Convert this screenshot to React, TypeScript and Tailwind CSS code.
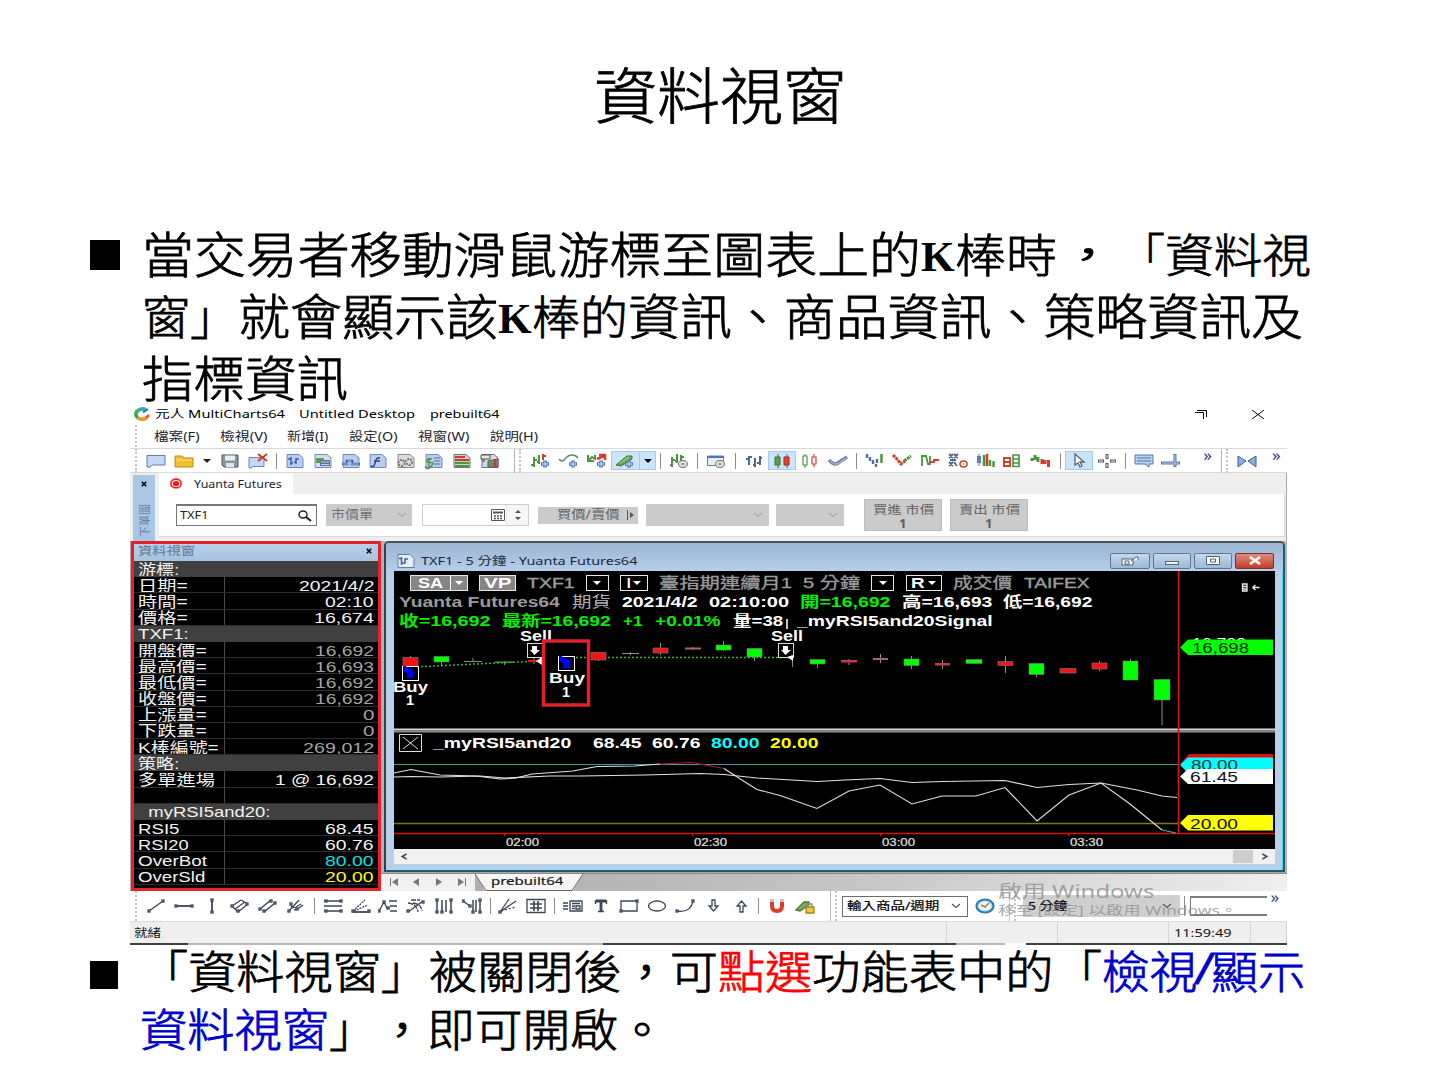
import React, { useLayoutEffect, useRef } from "react";

const UI = "font-['Noto_Sans','Noto_Sans_CJK_TC',sans-serif]";
const ARIAL = "font-['Liberation_Sans','Noto_Sans_CJK_TC',sans-serif]";
const HEI = "font-['Noto_Sans_CJK_TC',sans-serif]";

/** One line of text, stretched horizontally to fill exactly `w` pixels. */
function Fit({ w, className = "", children }: { w: number; className?: string; children: React.ReactNode }) {
  const ref = useRef<HTMLSpanElement>(null);
  useLayoutEffect(() => {
    const el = ref.current;
    if (el) el.style.transform = `scaleX(${w / el.offsetWidth})`;
  }, [w]);
  return (
    <span className={`block shrink-0 ${className}`} style={{ width: w }}>
      <span ref={ref} className="inline-block origin-left whitespace-pre">
        {children}
      </span>
    </span>
  );
}

/* ---------- icons ---------- */

function Cell({ children, on = false }: { children: React.ReactNode; on?: boolean }) {
  return (
    <span className={`flex h-[19px] w-[27.8px] shrink-0 items-center justify-center ${on ? "bg-[#cce4f7] outline outline-1 -outline-offset-1 outline-[#99cdf5]" : ""}`}>
      <svg viewBox="0 0 20 14" className="h-[14px] w-5 overflow-visible" fill="none">
        {children}
      </svg>
    </span>
  );
}
function Sep({ cls = "w-[9px]" }: { cls?: string }) {
  return (
    <span className={`flex h-4 shrink-0 justify-center ${cls}`}>
      <span className="w-px bg-[#8c8c8c]" />
    </span>
  );
}
function Grip({ cls = "h-6" }: { cls?: string }) {
  return <span className={`w-0 shrink-0 border-l-2 border-dotted border-[#c4c4c4] ${cls}`} />;
}
const Plus = () => <path d="M14 6.500v7M10 10h8" stroke="#4f76b8" strokeWidth="3.600" />;
const PlusLight = () => (
  <>
    <Plus />
    <path d="M14 7.500v5M11 10h6" stroke="#b4caee" strokeWidth="1.400" />
  </>
);
const Doc = ({ fill = "#b9cdf0", stroke = "#6f8cc0" }: { fill?: string; stroke?: string }) => (
  <path d="M2 .5h12l4 3.500v9.500H2z" fill={fill} stroke={stroke} />
);

function FileIcons() {
  return (
    <>
      <Cell>
        <path d="M1 1.500h18v9.500H6l-2 2H1z" fill="#c3d8f5" stroke="#5f7ea8" />
      </Cell>
      <Cell>
        <path d="M1 2h7l2 2h9v9H1z" fill="#f2be2c" stroke="#b98a17" />
        <path d="M2 6h16" stroke="#ffe28a" />
      </Cell>
      <span className="flex w-[19px] shrink-0 justify-center">
        <span className="border-x-4 border-t-4 border-x-transparent border-t-[#222]" />
      </span>
      <Cell>
        <path d="M2 1h16v12H4l-2-2z" fill="#8b97a3" stroke="#4c5661" />
        <path d="M5 1.500h10v5H5z" fill="#e9eef3" />
        <path d="M6 9h8v4H6z" fill="#dfe5ea" />
      </Cell>
      <Cell>
        <path d="M1 3.500h15v9H5l-2 1.500H1z" fill="#c3d8f5" stroke="#6d87ad" />
        <path d="M10 0l9 7M19 0l-9 7" stroke="#cc3b2b" strokeWidth="2" />
      </Cell>
    </>
  );
}

function DocIcons() {
  return (
    <>
      <Cell><Doc /><path d="M6 3v8M3 5h3M6 9h2M11 4v6M9 8h2M11 5h3" stroke="#3c5ea8" strokeWidth="1.500" /></Cell>
      <Cell><Doc fill="#d7dee8" /><path d="M3 4h8v5H3z" fill="#5aa04a" /><path d="M7 6h10v6H7z" fill="#56749c" /><path d="M8 8h8M8 10.500h8" stroke="#e8eef5" strokeWidth=".8" /></Cell>
      <Cell><Doc /><path d="M1 10h5V7h5v3h8" stroke="#3c5ea8" strokeWidth="2.600" /><path d="M2 10h5V7h3v3h8" stroke="#dbe6f8" strokeWidth=".7" /></Cell>
      <Cell><Doc /><path d="M12 4q-3-1-4 2L6 12q-1 1-3 0M6 7h6" stroke="#2c4580" strokeWidth="1.400" /></Cell>
      <Cell><Doc fill="#dcdcdc" stroke="#8a8a8a" /><circle cx="5.500" cy="9" r="3" stroke="#777" strokeWidth="2" strokeDasharray="2 1" /><circle cx="13" cy="8" r="3" stroke="#777" strokeWidth="2" strokeDasharray="2 1" /></Cell>
      <Cell><Doc /><path d="M8 5q-5-1-5 1.500t4 2 0 4-6 0M5 3.500v10" stroke="#4f9440" strokeWidth="1.400" /><path d="M10 4h6M10 7h6M10 10h6" stroke="#5b7394" strokeWidth="1.200" /></Cell>
      <Cell><Doc fill="#c9cdd4" stroke="#777" /><path d="M3 3h10M3 6h14" stroke="#cc3a2c" strokeWidth="2" /><path d="M3 9h14M3 12h14" stroke="#4a9a3c" strokeWidth="2" /></Cell>
      <Cell><Doc fill="#d4d8de" stroke="#777" /><path d="M1 1h9v4H1zM4 5v3M1 5l3 3" fill="#e8e8e8" stroke="#555" /><path d="M8 7v6h10V5z" fill="#8593a6" stroke="#555" /><path d="M9 9h4M9 11h4" stroke="#4a9a3c" strokeWidth="1.500" /><path d="M15 6v7" stroke="#cc3a2c" strokeWidth="3" /></Cell>
    </>
  );
}

function MainToolbar() {
  return (
    <div className="flex h-[25px] items-center border-y border-[#d9d9d9] bg-white pl-[5px]">
      <Grip />
      <span className="w-[5px] shrink-0" />
      <FileIcons />
      <Sep />
      <DocIcons />
      <span className="ml-2.5 h-6 w-px shrink-0 bg-[#b5b5b5]" />
      <span className="w-1 shrink-0" />
      <Grip />
      <span className="w-[7px] shrink-0" />
      <Cell><path d="M3 3v10M0 11h3M3 6h3M8 1v9M6 8h2" stroke="#4b9440" strokeWidth="2" /><path d="M12 0v6M12 2h3" stroke="#d0402c" strokeWidth="2" /><PlusLight /></Cell>
      <Cell><path d="M0 5q3 4 6 0t7-4 6 3" stroke="#5f8a6d" strokeWidth="1.400" /><PlusLight /></Cell>
      <Cell><path d="M1 1v6h6M2 6l3-3 3 2V1" stroke="#4b9440" strokeWidth="2" /><path d="M10 5l7-3M12 1h6v5" stroke="#d0402c" strokeWidth="2.600" /><PlusLight /></Cell>
      <span className="flex shrink-0 bg-[#cce4f7] outline outline-1 -outline-offset-1 outline-[#99cdf5]">
        <Cell><path d="M1 11L12 2h5v3L6 12z" fill="#6aa84f" stroke="#47762f" /><path d="M5 9l9-6" stroke="#b6dc9f" /><PlusLight /></Cell>
        <span className="flex w-[17px] items-center justify-center border-l border-[#99cdf5]">
          <span className="border-x-4 border-t-4 border-x-transparent border-t-black" />
        </span>
      </span>
      <Sep />
      <Cell><path d="M3 3v10M1 11h2M3 6h3M8 0v9M6 7h2M12 1v6M12 3h3" stroke="#4b9440" strokeWidth="2" /><ellipse cx="14" cy="10" rx="4.500" ry="3.500" fill="#ddd" stroke="#777" /><ellipse cx="14" cy="10" rx="1.500" ry="1" fill="#888" /></Cell>
      <Sep cls="w-[10px]" />
      <Cell><path d="M1.500 2h16v9.500h-16z" fill="#e4edf8" stroke="#5f7ea8" /><path d="M1 3h17" stroke="#4f76b8" strokeWidth="2" /><ellipse cx="14" cy="10" rx="4.500" ry="3.500" fill="#ddd" stroke="#777" /><ellipse cx="14" cy="10" rx="1.500" ry="1" fill="#888" /></Cell>
      <Sep cls="w-[10px]" />
      <Cell><path d="M5 2v9M2 5h3M5 3h3M11 4v9M9 11h2M16 2v9M13 9h3M16 4h2" stroke="#4a6a94" strokeWidth="2" /></Cell>
      <Cell on><path d="M6 0v14M15 0v14" stroke="#555" /><path d="M3 3h5v8H3z" fill="#58a04c" stroke="#38752e" /><path d="M12 3h5v8h-5z" fill="#de4532" stroke="#a32a1c" /></Cell>
      <Cell><path d="M5 0v2M5 11v3M3 2h4v9H3z" stroke="#4b9440" strokeWidth="1.200" /><path d="M14 0v3M14 10v3M12 3h4v7h-4z" stroke="#d0402c" strokeWidth="1.200" /></Cell>
      <Cell><path d="M1 6q5 6 9 3t9-6" stroke="#7186a3" strokeWidth="3.500" /><path d="M2 7q5 5 9 2t7-5" stroke="#b9c7d8" /></Cell>
      <Sep />
      <Cell><path d="M3 0v4M6 3v4M9 6v4M12 10v3M13 5v4" stroke="#4f6f9c" strokeWidth="2.400" /><path d="M17.500 0v9" stroke="#4b9440" strokeWidth="2.500" /></Cell>
      <Cell><path d="M1 1l4 4 4 5 4-3" stroke="#d0402c" strokeWidth="3" strokeDasharray="3 .7" /><path d="M12 7l7-5" stroke="#4b9440" strokeWidth="3" strokeDasharray="3 .7" /></Cell>
      <Cell><path d="M2 12V2h4l2 8h2V2" stroke="#4b9440" strokeWidth="1.800" /><path d="M10 8h4V6h5" stroke="#d0402c" strokeWidth="1.800" /></Cell>
      <Cell><path d="M1 0l4 4M5 0L1 4M6 0l4 4M10 0L6 4M1 8l4 4M5 8l-4 4M6 8l3 4M2 6h6" stroke="#4f6680" strokeWidth="1.800" /><ellipse cx="15.500" cy="10" rx="3.500" ry="3" stroke="#d0402c" strokeWidth="1.500" /><circle cx="15.500" cy="10" r=".8" fill="#d0402c" /></Cell>
      <Cell><path d="M3 0v12" stroke="#4f6f9c" /><path d="M1 2h4v7H1z" fill="#5f80b0" /><path d="M8 1v11" stroke="#4b9440" strokeWidth="2.500" /><path d="M11 0v12" stroke="#d0402c" strokeWidth="2.600" /><path d="M14 6v6M17.500 7v6" stroke="#4b9440" strokeWidth="2.400" /></Cell>
      <Cell><path d="M1 4h6v4H1zM1 8h6v4H1z" stroke="#d0402c" strokeWidth="1.900" /><path d="M10 1h6v4h-6zM10 5h6v4h-6zM10 9h6v3.500h-6z" stroke="#4b9440" strokeWidth="1.700" /></Cell>
      <Cell><path d="M1 4v3M4 1v5M7 3v5" stroke="#4b9440" strokeWidth="3" /><path d="M11 5v5M14 6v4M17.500 6v7" stroke="#d0402c" strokeWidth="3" /></Cell>
      <Sep cls="w-[10px]" />
      <Cell on><path d="M6 0v11l3-2 2 4 2-1-2-4h4z" fill="#fff" stroke="#5a6470" strokeWidth="1.300" /></Cell>
      <Cell><path d="M10 0v5M10 9v5M1 7h6M13 7h6" stroke="#555" strokeWidth="3" /><path d="M10 1v3M10 10v3M2 7h4M14 7h4" stroke="#fff" /></Cell>
      <Sep />
      <Cell><path d="M1 1h18v9h-4v3l-4-3H1z" fill="#bcd2ef" stroke="#5474a6" /><path d="M3 4h14M3 7h14" stroke="#5474a6" /></Cell>
      <Cell><path d="M0 9h19M14 0v13" stroke="#5474a6" strokeWidth="3" /><path d="M1 9h17M14 1v11" stroke="#b9cfec" /></Cell>
      <span className="ml-[18px] mb-3 w-3 shrink-0 text-[17px] leading-none text-[#2b3a8a]">»</span>
      <span className="ml-1.5 h-6 w-px shrink-0 bg-[#b5b5b5]" />
      <span className="w-1 shrink-0" />
      <Grip />
      <span className="w-[5px] shrink-0" />
      <Cell><path d="M1 2l8 5-8 6z" fill="#86b0e0" stroke="#41618f" /><path d="M19 2l-8 5 8 6z" fill="#86b0e0" stroke="#41618f" /></Cell>
      <span className="ml-[11px] mb-3 w-3 shrink-0 text-[17px] leading-none text-[#2b3a8a]">»</span>
    </div>
  );
}

/* ---------- drawing toolbar ---------- */

const INK = "#3c4656";
function Tool({ children }: { children: React.ReactNode }) {
  return (
    <span className="flex w-[27.95px] shrink-0 items-center justify-center">
      <svg viewBox="0 0 20 16" className="h-4 w-5" fill="none" stroke={INK} strokeWidth="1.300">
        {children}
      </svg>
    </span>
  );
}
const Dots = ({ p }: { p: [number, number][] }) => (
  <>
    {p.map(([x, y], i) => (
      <rect key={i} x={x - 1} y={y - 1} width="2" height="2" fill="#fff" />
    ))}
  </>
);

function DrawToolbar() {
  return (
    <div className="relative flex h-[31px] items-center border-b border-[#dcdcdc] bg-white pl-[5px]">
      <Grip cls="h-[30px]" />
      <span className="w-[5px] shrink-0" />
      <Tool><path d="M3 13L17 3" /><Dots p={[[3, 13], [17, 3]]} /></Tool>
      <Tool><path d="M2 8h17" strokeWidth="1.800" /><Dots p={[[2, 8], [18, 8]]} /></Tool>
      <Tool><path d="M10 2v13" strokeWidth="1.800" /><Dots p={[[10, 2], [10, 14]]} /></Tool>
      <Tool><path d="M2 8l9-6M5 11l10-7M8 14l10-8M2 8l6 6M11 2l7 4" /><Dots p={[[2, 8], [8, 13], [17, 6]]} /></Tool>
      <Tool><path d="M2 11L13 2M6 14L17 5" strokeWidth="1.500" /><Dots p={[[2, 11], [6, 13], [13, 3], [17, 5]]} /></Tool>
      <Tool><path d="M2 14L13 2M5 7q1 4 5 2l5-3M8 12q3 0 9-5" /><Dots p={[[3, 13], [5, 6], [11, 11]]} /></Tool>
      <Sep />
      <Tool><path d="M1 3h18M1 8h18M1 13h18" strokeWidth="1.600" /><Dots p={[[3, 3], [3, 13], [18, 3], [18, 13]]} /></Tool>
      <Tool><path d="M2 14h17" strokeWidth="1.800" /><path d="M2 13L14 2M3 13l14-6" strokeDasharray="2 1" /><Dots p={[[2, 13], [18, 13]]} /></Tool>
      <Tool><path d="M1 13l5-9 3 6 3-1M11 3h8M12 8h7M12 13h7" /><Dots p={[[1, 13], [6, 4], [10, 10]]} /></Tool>
      <Tool><path d="M2 14L17 3" /><path d="M2 5q9 1 10 9M5 2h9M7 5q8 1 9 8" strokeDasharray="5 1" /><Dots p={[[2, 13], [17, 4]]} /></Tool>
      <Tool><path d="M3 2v12M8 2v12M12 2v12M17 2v12" strokeWidth="1.500" /><Dots p={[[3, 2], [3, 14], [8, 14], [17, 2], [17, 14]]} /></Tool>
      <Tool><path d="M1 3l7 5M11 2v12M14 2v12M18 2v12" strokeWidth="1.500" /><Dots p={[[1, 3], [8, 8], [11, 14], [18, 2], [18, 14]]} /></Tool>
      <Sep cls="w-2" />
      <Tool><path d="M2 14L11 1M2 14L18 3" /><path d="M3 13l15-4" strokeDasharray="2 2" /><Dots p={[[2, 14]]} /></Tool>
      <Tool><path d="M1 1.500h18v13H1z" /><path d="M4 6h12M4 10h12M8 3v10M12 3v10" strokeWidth="1.600" /></Tool>
      <Sep />
      <Tool><path d="M0 5h5M0 8h5M0 11h5M7 3h12v10H7zM9 5.500h8M9 8h3M9 10.500h3M13 8h4v3h-4z" /></Tool>
      <Tool><path d="M5 3h10M10 3v10" strokeWidth="2.800" /><path d="M7 13.500h6M4.500 2v4M15.500 2v4" strokeWidth="1.400" /></Tool>
      <Tool><path d="M2 3h16v10H2z" /><Dots p={[[2, 13], [18, 3]]} /></Tool>
      <Tool><ellipse cx="10" cy="8" rx="8.500" ry="5" /></Tool>
      <Tool><path d="M2 13q14 2 16-10" /><Dots p={[[2, 13], [18, 3]]} /></Tool>
      <Tool><path d="M9 2h3v6h3l-4.500 5L6 8h3z" /></Tool>
      <Tool><path d="M9 14h3V8h3l-4.500-5L6 8h3z" /></Tool>
      <Sep cls="w-2" />
      <Tool><path d="M5 2v6q0 5 5 5t5-5V2" stroke="#d9402c" strokeWidth="4" /><path d="M3 2.500h4M13 2.500h4" stroke="#c4c4c4" strokeWidth="3" /></Tool>
      <Tool><path d="M1 12L9 4h5v3L5 13z" fill="#76ad5c" stroke="#4c7a37" /><path d="M11 9h8v6h-8z" fill="#f3c433" stroke="#a8841b" /><path d="M13 9V6h4v3" stroke="#888" /></Tool>
      <span className="ml-[11px] h-[30px] w-px shrink-0 bg-[#b5b5b5]" />
      <span className="w-1 shrink-0" />
      <Grip cls="h-[30px]" />
      <div className="ml-[5px] flex h-[21px] w-[126px] shrink-0 items-center border border-[#6e6e6e] bg-white pl-1 text-[11.5px] text-black">
        <Fit w={92} className="[-webkit-text-stroke:0.2px_#000]">輸入商品/週期</Fit>
        <Chevron cls="ml-3" color="#555" />
      </div>
      <svg viewBox="0 0 20 16" className="ml-[7px] h-4 w-5 shrink-0">
        <ellipse cx="10" cy="8" rx="8.500" ry="6.500" fill="#b9dcf0" stroke="#2d7fb0" strokeWidth="2.200" />
        <ellipse cx="10" cy="8" rx="6" ry="4.300" fill="#edf6fb" />
        <path d="M6 7l4 2 4-4" stroke="#b77d35" strokeWidth="1.600" fill="none" />
      </svg>
      <span className="ml-3.5 h-[30px] w-px shrink-0 bg-[#c9c9c9]" />
      <span className="w-1 shrink-0" />
      <Grip cls="h-[30px]" />
      <div className="ml-[7px] flex h-[22px] w-[157px] shrink-0 items-center border border-[#d0d0d0] bg-[#cfcfcf] pl-1 text-[11.5px] text-black">
        <Fit w={40} className="[-webkit-text-stroke:0.2px_#000]">5 分鐘</Fit>
        <Chevron cls="ml-[94px]" color="#555" />
      </div>
      <span className="ml-1 h-5 w-px shrink-0 bg-[#8c8c8c]" />
      <span className="ml-[5px] h-5 w-[77px] shrink-0 border-y-2 border-l border-[#7c7c7c] bg-white" />
      <span className="mb-5 ml-1 text-[17px] leading-none text-[#2b3a8a]">»</span>
      <div className="absolute left-[868px] top-[-12px] text-[#8f8f8f]/80">
        <Fit w={157} className="h-6 text-[18px] leading-6">啟用 Windows</Fit>
        <Fit w={240} className="h-4 text-[12px] leading-4">移至 [設定] 以啟用 Windows。</Fit>
      </div>
    </div>
  );
}

function Chevron({ cls = "", color = "#a8a8a8" }: { cls?: string; color?: string }) {
  return (
    <svg viewBox="0 0 10 6" className={`h-1.5 w-2.5 shrink-0 ${cls}`} fill="none" stroke={color} strokeWidth="1.200">
      <path d="M1 1l4 3.500L9 1" />
    </svg>
  );
}

/* ---------- order panel ---------- */

function OrderPanel() {
  return (
    <div className="flex h-[68px] border-r border-[#a8a8a8] bg-[#efefef] pl-[3px] pr-px">
      <div className="mt-0.5 flex w-[22px] flex-col items-center bg-[#aac6e6] text-[#6b7f98]">
        <svg viewBox="0 0 8 8" className="mt-1.5 h-1.5 w-2" stroke="#000" strokeWidth="2"><path d="M1 1l6 6M7 1L1 7" /></svg>
        <div className="mt-[17px] flex flex-col items-center text-[11px] leading-[11px]">
          <span className="-rotate-90">圖</span>
          <span className="-rotate-90">單</span>
          <span className="-rotate-90">下</span>
        </div>
      </div>
      <div className="ml-1 flex flex-1 flex-col">
        <div className="flex h-[21px] w-[134px] items-center bg-white pl-2.5">
          <svg viewBox="0 0 16 14" className="mr-[11px] h-[13px] w-3.5">
            <ellipse cx="8" cy="7" rx="7.500" ry="6.500" fill="#f9b9b2" />
            <ellipse cx="8" cy="7" rx="5.800" ry="4.800" fill="#fff" stroke="#e51c1c" strokeWidth="1.600" />
            <ellipse cx="8" cy="7" rx="3.600" ry="3" fill="#e51c1c" />
          </svg>
          <Fit w={88} className="pt-0.5 text-[11px] text-[#1c1c3a]">Yuanta Futures</Fit>
        </div>
        <div className="flex h-[43px] items-center border-b border-r border-[#dadada] bg-white pl-[17px]">
          <div className="flex h-[22px] w-[141px] items-center justify-between border border-t-2 border-[#777] px-[3px] text-[11px] text-[#222]">
            <Fit w={29}>TXF1</Fit>
            <svg viewBox="0 0 16 12" className="h-3 w-4" fill="none" stroke="#222"><ellipse cx="6" cy="4.500" rx="4" ry="3.500" strokeWidth="1.400" /><path d="M9 7l5 4" strokeWidth="2.200" /></svg>
          </div>
          <div className="ml-[9px] flex h-[22px] w-[86px] items-center justify-between bg-[#cbcbcb] px-[5px] text-[12px] text-[#707070]">
            <Fit w={42}>市價單</Fit>
            <Chevron />
          </div>
          <div className="ml-2.5 flex h-[22px] w-[107px] items-center justify-end border border-[#cfcfcf]">
            <svg viewBox="0 0 14 12" className="mr-px h-3 w-3.5" fill="none" stroke="#555"><path d="M.5.500h13v11H.5z" /><path d="M2 3.500h10" strokeWidth="2" /><path d="M3 7h9M3 9.500h9" strokeDasharray="2 1" strokeWidth="1.500" /></svg>
            <span className="flex h-full w-[22px] flex-col items-center justify-center gap-1 border-l border-[#e4e4e4] bg-[#f6f6f6]">
              <span className="border-x-[3px] border-b-[3px] border-x-transparent border-b-[#555]" />
              <span className="border-x-[3px] border-t-[3px] border-x-transparent border-t-[#555]" />
            </span>
          </div>
          <div className="ml-[9px] flex h-[17px] w-[100px] items-center bg-[#cbcbcb] pl-[19px] text-[12px] text-[#606060]">
            <Fit w={62}>買價/賣價</Fit>
            <span className="ml-2 h-2.5 w-px bg-[#555]" />
            <span className="ml-0.5 border-y-[3px] border-l-4 border-y-transparent border-l-[#555]" />
          </div>
          <div className="ml-2 flex h-[22px] w-[123px] items-center justify-end bg-[#cbcbcb] pr-1.5"><Chevron /></div>
          <div className="ml-[7px] flex h-[22px] w-[68px] items-center justify-end bg-[#cbcbcb] pr-1.5"><Chevron /></div>
          {["買進 市價", "賣出 市價"].map((t, i) => (
            <div key={t} className={`flex h-8 w-[78px] flex-col items-center border border-[#bdbdbd] bg-[#cbcbcb] text-[11.5px] text-[#606060] ${i ? "ml-2" : "ml-5"}`}>
              <Fit w={61} className="h-[15px] leading-[19px]">{t}</Fit>
              <Fit w={8} className="h-[15px] font-bold leading-[17px]">1</Fit>
            </div>
          ))}
        </div>
      </div>
    </div>
  );
}

/* ---------- data window ---------- */

type Row = { l?: string; lw?: number; v?: string; vw?: number; c?: string; head?: boolean };
const GREY = "text-[#a3a3a3]";
const rows: Row[] = [
  { l: "游標:", lw: 41, head: true },
  { l: "日期=", lw: 50, v: "2021/4/2", vw: 75 },
  { l: "時間=", lw: 50, v: "02:10", vw: 49 },
  { l: "價格=", lw: 50, v: "16,674", vw: 60 },
  { l: "TXF1:", lw: 51, head: true },
  { l: "開盤價=", lw: 69, v: "16,692", vw: 59, c: GREY },
  { l: "最高價=", lw: 69, v: "16,693", vw: 59, c: GREY },
  { l: "最低價=", lw: 69, v: "16,692", vw: 59, c: GREY },
  { l: "收盤價=", lw: 69, v: "16,692", vw: 59, c: GREY },
  { l: "上漲量=", lw: 69, v: "0", vw: 11, c: GREY },
  { l: "下跌量=", lw: 69, v: "0", vw: 11, c: GREY },
  { l: "K棒編號=", lw: 81, v: "269,012", vw: 71, c: GREY },
  { l: "策略:", lw: 41, head: true },
  { l: "多單進場", lw: 77, v: "1 @ 16,692", vw: 99 },
  {},
  { l: "_myRSI5and20:", lw: 133, head: true },
  { l: "RSI5", lw: 41, v: "68.45", vw: 49 },
  { l: "RSI20", lw: 51, v: "60.76", vw: 49 },
  { l: "OverBot", lw: 69, v: "80.00", vw: 49, c: "text-[#00e5e5]" },
  { l: "OverSld", lw: 67, v: "20.00", vw: 49, c: "text-[#ffff00]" },
];

function DataWindow() {
  return (
    <div className="flex h-[350px] w-[250px] shrink-0 flex-col border-[3px] border-[#e8202a] bg-black">
      <div className="flex h-[17px] shrink-0 items-center justify-between bg-gradient-to-b from-[#b9d0ea] to-[#a6c2e2] pb-1 pl-1 pr-[5px] text-[11.5px] leading-[14px] text-[#5f7590]">
        <Fit w={57}>資料視窗</Fit>
        <svg viewBox="0 0 8 8" className="h-1.5 w-2" stroke="#000" strokeWidth="2"><path d="M1 1l6 6M7 1L1 7" /></svg>
      </div>
      {rows.map((r, i) => (
        <div key={i} className={`flex h-[16.2px] shrink-0 items-center overflow-hidden border-b text-[15px] leading-[17px] text-[#f2f2f2] ${ARIAL} ${r.head ? "border-[#404040] bg-[#404040]" : "border-[#2e2e2e]"}`}>
          <div className={`flex h-full items-center pl-1 ${r.head ? "w-full" : "w-[91px] border-r border-[#4a4a4a]"}`}>
            {r.l && <Fit w={r.lw!} className="h-4">{r.l}</Fit>}
          </div>
          {r.v && (
            <div className={`flex flex-1 justify-end pr-1 ${r.c ?? ""}`}>
              <Fit w={r.vw!} className="h-4">{r.v}</Fit>
            </div>
          )}
        </div>
      ))}
    </div>
  );
}

/* ---------- chart ---------- */

type Candle = [x: number, w: number, top: number, bottom: number, hi: number, lo: number, color: string];
const G = "#00ff00", R = "#f01414", N = "#8a8a8a", P = "#b06068";
const candles: Candle[] = [
  [403, 15, 657.5, 667, 656, 670, R], [434, 15, 656.5, 662, 656, 665, G], [464, 18, 661, 662, 658, 662, N],
  [495, 19, 661.5, 663, 661, 665, "#3d9a3d"], [528, 12, 660, 662, 658, 664, R], [591, 15, 652.5, 660, 652, 661, R],
  [622, 17, 653, 654, 652, 655, N], [653, 15, 648, 653, 643, 655, R], [685, 16, 647.5, 649.5, 647, 650, P],
  [716, 15, 645, 650, 641, 651, G], [747, 15, 648.5, 657, 648, 661, G], [810, 15, 659.5, 664, 659, 668, G],
  [841, 16, 660, 662.5, 659, 665, "#c83a44"], [873, 15, 658, 660, 654, 663, P], [904, 15, 659, 665.5, 656, 669, G],
  [935, 15, 663, 665.5, 660, 669, "#c83a44"], [966, 16, 659.5, 663.5, 659, 664, G], [998, 15, 661.5, 665.5, 656, 673, R],
  [1029, 15, 663.5, 674.5, 663, 677, G], [1060, 16, 668.5, 673, 668, 673, R], [1092, 15, 663, 669, 661, 671, R],
  [1123, 15, 661, 680, 659, 680, G], [1154, 16, 679.5, 700, 679, 725, G],
];

function PriceChart() {
  const label = "font-['Liberation_Sans',sans-serif]";
  return (
    <svg viewBox="394 571 881 278" className="absolute inset-0 h-full w-full" fill="none">
      <path d="M413 667L475 664L541 661" stroke="#3fae3f" strokeWidth="1.500" strokeDasharray="2 2" />
      <path d="M568 657.500H790" stroke="#3fae3f" strokeWidth="1.500" strokeDasharray="2 2" />
      {candles.map(([x, w, t, b, hi, lo, c]) => (
        <g key={x}>
          <path d={`M${x + w / 2} ${hi}V${lo}`} stroke="#909090" />
          <rect x={x} y={t} width={w} height={b - t} fill={c} stroke={b - t > 3 ? "#7a7a7a" : "none"} strokeWidth=".6" />
        </g>
      ))}
      <path d="M792.500 658V667" stroke="#aaa" strokeWidth=".8" />
      {[[402, 666], [558, 656]].map(([x, y]) => (
        <g key={x}>
          <rect x={x + 0.5} y={y + 0.5} width="16" height="14" fill="#000" stroke="#fff" />
          <path d={`M${x + 1} ${y}h3l2 3 2.500-1 5 5h-2.500v5h-6v-5l-3-1z`} fill="#0000ff" />
        </g>
      ))}
      {[[527, 643], [778, 643]].map(([x, y]) => (
        <g key={x}>
          <rect x={x + 0.5} y={y + 0.5} width="15" height="14" fill="#000" stroke="#ddd" />
          <path d={`M${x + 5} ${y + 3}h5v4h3l-5.500 5L${x + 3} ${y + 7}h2z`} fill="#fff" />
        </g>
      ))}
      <path d="M542 657v8l-6-4zM787 657l6-2v6z" fill="#fff" />
      <g className={label} fill="#fff" fontWeight="bold" fontSize="14.500">
        <text x="520" y="641" textLength="32" lengthAdjust="spacingAndGlyphs">Sell</text>
        <text x="771" y="641" textLength="32" lengthAdjust="spacingAndGlyphs">Sell</text>
        <text x="393" y="692" textLength="35" lengthAdjust="spacingAndGlyphs">Buy</text>
        <text x="406" y="705">1</text>
        <text x="549" y="683" textLength="36" lengthAdjust="spacingAndGlyphs">Buy</text>
        <text x="562" y="697">1</text>
      </g>
      <rect x="543.500" y="641" width="45" height="64" stroke="#e0202a" strokeWidth="3.500" />

      <path d="M394 729.500H1275" stroke="#d8d8d8" strokeWidth="2" />
      <path d="M394 731.500H1275" stroke="#8c8c8c" strokeWidth="2" />
      <path d="M394 764.500H1178" stroke="#3f9a9a" strokeWidth="1.200" />
      <path d="M394 823.500H1178" stroke="#7a7a10" strokeWidth="1.400" />
      <path d="M394 833.500H1275" stroke="#d81010" strokeWidth="1.400" />
      <path d="M1178.500 571V834" stroke="#e01010" strokeWidth="1.600" />
      <path d="M504.500 833v3M692.500 833v3M880.500 833v3M1068.500 833v3" stroke="#d81010" />
      <g strokeWidth="1.100" stroke="#e0e0e0">
        <path d="M394 777L411 776.500 440 777 480 776 505 778 550 776 580 776 645 775 700 773.500 724 774.500 757 778 817 781.500 845 780 880 778.500 912 782.500 942 781.500 1005 780.500 1037 787.500 1069 784.500 1101 783 1137 790 1162 796 1177 797.500" />
        <path d="M394 773L411 769.500 440 775 476 776 500 779 516 778 532 774 573 771 597 766.500 635 766 660 764" />
        <path d="M724 768.500L745 782 757 789.500 780 795.500 817 808.500 849 791 880 785 912 804 942 796 976 796 1005 787.500 1037 821 1069 795 1101 783 1130 804 1162 830" />
        <path d="M660 764L692 762.500 705 765 724 768.500" stroke="#c01414" />
        <path d="M1162 830L1176 833" stroke="#40b0b0" />
      </g>

      <g className={label} fontSize="15" fill="#fff">
        <text x="1192" y="648" textLength="54" lengthAdjust="spacingAndGlyphs">16,700</text>
        <path d="M1180 647.500l8-8h85v15.500h-85z" fill={G} />
        <text x="1192" y="652.500" fontSize="14.500" fill="#052a05" textLength="57" lengthAdjust="spacingAndGlyphs">16,698</text>
        <path d="M1180 764l9-10h84v10z" fill="#d81010" />
        <path d="M1180 765l8-7.500h85v15.500h-85z" fill="#00ffff" />
        <text x="1191" y="770" fontSize="14" fill="#033" textLength="47" lengthAdjust="spacingAndGlyphs">80.00</text>
        <path d="M1180 776.500l8-7.500h85v15h-85z" fill="#fff" />
        <text x="1190" y="782" fontSize="14.500" fill="#111" textLength="48" lengthAdjust="spacingAndGlyphs">61.45</text>
        <path d="M1180 823l8-8h85v15.500h-85z" fill="#ffff00" />
        <text x="1190" y="828.500" fontSize="14.500" fill="#111" textLength="48" lengthAdjust="spacingAndGlyphs">20.00</text>
      </g>
      <g className={label} fontSize="10.500" fill="#e0e0e0" stroke="#e0e0e0" strokeWidth=".2">
        <text x="506" y="846" textLength="33" lengthAdjust="spacingAndGlyphs">02:00</text>
        <text x="694" y="846" textLength="33" lengthAdjust="spacingAndGlyphs">02:30</text>
        <text x="882" y="846" textLength="33" lengthAdjust="spacingAndGlyphs">03:00</text>
        <text x="1070" y="846" textLength="33" lengthAdjust="spacingAndGlyphs">03:30</text>
      </g>
      <g stroke="#eee" strokeWidth="1.300">
        <path d="M1242.500 584h4.500v7h-4.500zM1242 586.500h5M1242 589h5M1252.500 587.500h7M1252.500 587.500l3-2.500M1252.500 587.500l3 2.500" />
      </g>
    </svg>
  );
}

const DropMark = () => <span className="border-x-4 border-t-4 border-x-transparent border-t-white" />;
const boxed = "flex h-4 shrink-0 items-center justify-center border border-[#e8e8e8]";

function ChartHeader() {
  return (
    <div className={`relative text-[14.5px] font-bold leading-[18px] text-white ${ARIAL}`}>
      <div className="flex h-[23px] items-center gap-[11.2px] pl-4 pt-px text-[#9a9a9a]">
        <span className={`${boxed} w-[58px] bg-[#868686] text-white`}>
          <span className="flex w-10 justify-center"><Fit w={25}>SA</Fit></span>
          <span className="flex h-full w-[18px] items-center justify-center border-l border-white"><DropMark /></span>
        </span>
        <span className={`${boxed} w-[37px] bg-[#868686] text-white`}><Fit w={27}>VP</Fit></span>
        <Fit w={47} className="font-normal [-webkit-text-stroke:0.4px_#9a9a9a]">TXF1</Fit>
        <span className={`${boxed} w-[23px]`}><DropMark /></span>
        <span className={`${boxed} w-7 gap-0.5 text-white`}><span>I</span><DropMark /></span>
        <Fit w={133} className="font-normal [-webkit-text-stroke:0.3px_#9a9a9a]">臺指期連續月1</Fit>
        <Fit w={57} className="font-normal [-webkit-text-stroke:0.3px_#9a9a9a]">5 分鐘</Fit>
        <span className={`${boxed} w-[23px]`}><DropMark /></span>
        <span className={`${boxed} w-9 gap-1 text-white`}><Fit w={13}>R</Fit><DropMark /></span>
        <Fit w={60} className="font-normal [-webkit-text-stroke:0.3px_#9a9a9a]">成交價</Fit>
        <Fit w={66} className="font-normal [-webkit-text-stroke:0.4px_#9a9a9a]">TAIFEX</Fit>
      </div>
      <div className="flex h-[16px] items-center gap-[11.5px] pl-[5px]">
        <Fit w={161} className="text-[#9a9a9a]">Yuanta Futures64</Fit>
        <Fit w={39} className="font-normal text-[#b0b0b0]">期貨</Fit>
        <Fit w={75}>2021/4/2</Fit>
        <Fit w={80}>02:10:00</Fit>
        <Fit w={90} className="text-[#00f000]">開=16,692</Fit>
        <Fit w={90}>高=16,693</Fit>
        <Fit w={89}>低=16,692</Fit>
      </div>
      <div className="flex h-[21px] items-center gap-3 pl-[5px] text-[#00f000]">
        <Fit w={91}>收=16,692</Fit>
        <Fit w={109}>最新=16,692</Fit>
        <Fit w={20}>+1</Fit>
        <Fit w={66}>+0.01%</Fit>
        <span className="flex items-center gap-px text-white">
          <Fit w={50}>量=38</Fit>
          <span className="ml-0.5 mt-1.5 h-2.5 w-0.5 bg-[#d8c0a0]" />
        </span>
        <Fit w={196} className="-ml-[3px] text-white">_myRSI5and20Signal</Fit>
      </div>
      <div className="mt-[102px] flex h-[19px] items-center pl-[5px]">
        <svg viewBox="0 0 23 18" className="h-[18px] w-[23px]" fill="none" stroke="#ddd"><path d="M.5.500h22v17H.5z" /><path d="M4 3l15 12M19 3L4 15" /></svg>
        <Fit w={138} className="ml-[11px]">_myRSI5and20</Fit>
        <div className="ml-[22px] flex gap-[11px]">
          <Fit w={48}>68.45</Fit>
          <Fit w={48}>60.76</Fit>
          <Fit w={48} className="text-[#00ffff]">80.00</Fit>
          <Fit w={48} className="text-[#ffff00]">20.00</Fit>
        </div>
      </div>
    </div>
  );
}

function ChartWindow() {
  const btn = "flex h-4 items-center justify-center rounded-[2px] border border-[#5f7590] bg-gradient-to-b from-[#c6d9ee] to-[#9db8d6]";
  return (
    <div className="flex h-[331px] w-[901px] shrink-0 flex-col rounded-t-[5px] border-2 border-b-[#1f5a6c] border-l-[#3a4048] border-r-[#1d5c70] border-t-[#4c5258] bg-[#b7d0ea] shadow-[inset_-1px_0_0_#49d2ea]">
      <div className="flex h-[27px] shrink-0 items-center rounded-t-[4px] bg-gradient-to-b from-[#9cb5d3] to-[#b5cde9] pl-[11px] pr-[9px] pt-2">
        <svg viewBox="0 0 18 14" className="mr-1.5 h-[14px] w-[18px]" fill="none"><path d="M1 .5h12l4 4v9H1z" fill="#e8eef8" stroke="#5f7eb8" /><path d="M4.500 3v8M2 4.500h2.500M4.500 9H8V5h3" stroke="#3c5ea8" strokeWidth="1.500" /></svg>
        <Fit w={217} className="text-[11px] leading-4 text-[#1a2a40]">TXF1 - 5 分鐘 - Yuanta Futures64</Fit>
        <div className="ml-auto flex gap-[3px]">
          <span className={`${btn} w-10`}><svg viewBox="0 0 18 10" className="h-2.5 w-[18px]" fill="#fff" stroke="#4f5f73"><path d="M1 3h11v6H1zM4 5h4v3H4zM10 5l5-4h2v3" /></svg></span>
          <span className={`${btn} w-[38px]`}><span className="mt-1 h-1 w-3.5 border border-[#5a6675] bg-[#eee]" /></span>
          <span className={`${btn} w-[38px]`}><svg viewBox="0 0 14 9" className="h-[9px] w-3.5" fill="#fff" stroke="#4f5f73"><path d="M.5.500h13v8H.5zM4.500 3h5v3h-5z" /></svg></span>
          <span className="flex h-4 w-[39px] items-center justify-center rounded-[2px] border border-[#7c3028] bg-gradient-to-b from-[#dd8d80] to-[#c23b26]"><svg viewBox="0 0 12 9" className="h-[9px] w-3" stroke="#fff" strokeWidth="2.500"><path d="M1 1l10 7M11 1L1 8" /></svg></span>
        </div>
      </div>
      <div className="ml-2 mr-2 mt-px flex flex-1 flex-col">
        <div className="relative h-[278px] w-[881px] overflow-hidden bg-black">
          <PriceChart />
          <ChartHeader />
        </div>
        <div className="flex h-[15px] w-[881px] items-center bg-[#f0f0f0] px-1.5">
          <svg viewBox="0 0 8 8" className="h-[7px] w-2" fill="none" stroke="#444" strokeWidth="1.800"><path d="M7 1L2 4l5 3" /></svg>
          <span className="ml-auto mr-2 h-[13px] w-5 bg-[#cdcdcd]" />
          <svg viewBox="0 0 8 8" className="h-[7px] w-2" fill="none" stroke="#444" strokeWidth="1.800"><path d="M1 1l5 3-5 3" /></svg>
        </div>
      </div>
    </div>
  );
}

function SheetTabs() {
  return (
    <div className="mt-[1px] flex h-[18px] items-stretch border-t border-[#8a8a8a] bg-gradient-to-r from-[#a9a9a9] via-[#c4c4c4] to-[#efefef]">
      <svg viewBox="0 0 94 17" className="h-[17px] w-[94px] shrink-0 bg-[#f0f0f0]" fill="#777" stroke="none">
        <path d="M9 4h1v8H9zM17 4v8l-6-4zM38 4v8l-6-4zM55 4v8l6-4zM77 4v8l6-4zM84 4h1v8h-1z" />
      </svg>
      <div className="relative flex w-[108px] items-center pl-4">
        <svg viewBox="0 0 108 17" className="absolute inset-0 h-full w-full"><path d="M0 0h108L98 16.500H10z" fill="#f6f6f6" /><path d="M0 0l11 16.500h86L108 0" fill="none" stroke="#666" /></svg>
        <Fit w={73} className="relative -mt-1 text-[11.5px] leading-[14px] text-[#1a1a1a] [-webkit-text-stroke:0.2px_#1a1a1a]">prebuilt64</Fit>
      </div>
    </div>
  );
}

/* ---------- application window ---------- */

const menus: [string, number][] = [["檔案(F)", 45], ["檢視(V)", 47], ["新增(I)", 41], ["設定(O)", 49], ["視窗(W)", 51], ["說明(H)", 48]];

function AppWindow() {
  return (
    <div className={`ml-[130px] flex h-[541px] w-[1157px] shrink-0 flex-col bg-white font-normal ${UI}`}>
      <div className="flex h-[20px] items-center pl-[3px]">
        <svg viewBox="0 0 18 14" className="mr-1 h-[14px] w-[18px]" fill="none" strokeWidth="3.800">
          <path d="M13 2.800Q8 .6 4.500 4" stroke="#39a9c9" />
          <path d="M4.500 3.500Q1 8 5 11" stroke="#3fae49" />
          <path d="M5 11q4 2.500 8.500 0" stroke="#f39a1e" />
          <path d="M10 5.500l5-3.500" stroke="#2b6fb5" strokeWidth="2" />
          <path d="M13 11l3-3" stroke="#e5572b" strokeWidth="2.500" />
        </svg>
        <div className="flex text-[11.5px] leading-[18px] text-black">
          <Fit w={130}>元人 MultiCharts64</Fit>
          <Fit w={116} className="ml-[14px]">Untitled Desktop</Fit>
          <Fit w={70} className="ml-[15px]">prebuilt64</Fit>
        </div>
        <svg viewBox="0 0 12 9" className="ml-[695px] h-[9px] w-3" fill="none" stroke="#000"><path d="M0 2.500h8.500V9M2 .5h9.500V7" /></svg>
        <svg viewBox="0 0 12 9" className="ml-[45px] h-[9px] w-3" fill="none" stroke="#000"><path d="M0 0l12 9M12 0L0 9" /></svg>
      </div>
      <div className="flex h-[24px] items-center pl-[5px] text-[12px] leading-[18px] text-[#1c1c2c]">
        <Grip cls="h-[22px]" />
        <div className="ml-[17px] flex gap-[20.5px] pt-px">
          {menus.map(([t, w]) => <Fit key={t} w={w}>{t}</Fit>)}
        </div>
      </div>
      <MainToolbar />
      <OrderPanel />
      <div className="flex h-[350px] bg-[#a9a9a9] pl-px">
        <DataWindow />
        <div className="flex w-[906px] flex-col">
          <div className="bg-[#b4b4b4] pl-[3px] pr-0.5"><ChartWindow /></div>
          <SheetTabs />
        </div>
      </div>
      <DrawToolbar />
      <div className="flex h-[21px] items-center bg-[#efefef] pl-1 text-[11.5px] text-[#111]">
        <Fit w={27}>就緒</Fit>
        <span className="ml-[785px] h-full w-px bg-[#d4d4d4]" />
        <span className="ml-[110px] h-full w-px bg-[#d4d4d4]" />
        <span className="ml-[110px] h-full w-px bg-[#d4d4d4]" />
        <Fit w={58} className="ml-[5px] pt-px">11:59:49</Fit>
        <span className="ml-[18px] h-full w-px bg-[#d4d4d4]" />
        <span className="ml-[35px] h-full w-px bg-[#d4d4d4]" />
      </div>
      <div className="flex h-[2px]">
        <span className="w-[58px] bg-[#404040]" />
        <span className="w-[415px] bg-[#b8b8b8]" />
        <span className="w-[353px] bg-[#404040]" />
        <span className="w-[49px] bg-[#b8b8b8]" />
        <span className="w-[21px]" />
        <span className="flex-1 bg-[#404040]" />
      </div>
    </div>
  );
}

/* ---------- slide ---------- */

const K = () => <Fit w={34} className="pt-[5px] font-['Liberation_Serif',serif] text-[42px] font-bold [-webkit-text-stroke:0]">K</Fit>;

export default function App() {
  return (
    <div className={`flex h-[1080px] w-[1440px] flex-col overflow-hidden bg-white font-light text-black [text-spacing-trim:space-all] ${HEI}`}>
      <h1 className="flex h-[196px] shrink-0 justify-center pt-[58px] text-[61px] leading-[70px] [-webkit-text-stroke:0.8px]">
        <Fit w={252}>資料視窗</Fit>
      </h1>
      <section className="flex h-[208px] shrink-0 pl-[90px] pt-[25px]">
        <span className="mr-[22px] mt-[19px] size-[30px] shrink-0 bg-black" />
        <div className="text-[49px] leading-[62px] [-webkit-text-stroke:0.8px]">
          <div className="flex h-[62px]">
            <Fit w={779}>當交易者移動滑鼠游標至圖表上的</Fit>
            <K />
            <Fit w={102} className="text-[46px]">棒時</Fit>
            <Fit w={62} className="text-[38px]">，</Fit>
            <Fit w={46} className="text-[44px]">「</Fit>
            <Fit w={146} className="text-[46px]">資料視</Fit>
          </div>
          <div className="flex h-[62px]">
            <Fit w={96} className="text-[46px]">窗」</Fit>
            <Fit w={260}>就會顯示該</Fit>
            <K />
            <Fit w={96} className="text-[46px]">棒的</Fit>
            <Fit w={675}>資訊、商品資訊、策略資訊及</Fit>
          </div>
          <div className="flex h-[62px]">
            <Fit w={206}>指標資訊</Fit>
          </div>
        </div>
      </section>
      <AppWindow />
      <section className="flex pl-[90px]">
        <span className="mr-[22px] mt-[16px] h-[28px] w-[28px] shrink-0 bg-black" />
        <div className="-mt-[4px] text-[45px] leading-[58px] [-webkit-text-stroke:0.8px]">
          <div className="flex h-[58px]">
            <Fit w={578}>「資料視窗」被關閉後，可</Fit>
            <Fit w={94} className="text-[#ff0000]">點選</Fit>
            <Fit w={290}>功能表中的「</Fit>
            <div className="flex text-[#0000cc]">
              <Fit w={95}>檢視</Fit>
              <Fit w={14} className="font-['Liberation_Sans',sans-serif] text-[42px] italic">/</Fit>
              <Fit w={94}>顯示</Fit>
            </div>
          </div>
          <div className="flex h-[58px]">
            <Fit w={189} className="text-[#0000cc]">資料視窗</Fit>
            <Fit w={48}>」</Fit>
            <Fit w={50}>，</Fit>
            <Fit w={191}>即可開啟</Fit>
            <Fit w={48}>。</Fit>
          </div>
        </div>
      </section>
    </div>
  );
}
